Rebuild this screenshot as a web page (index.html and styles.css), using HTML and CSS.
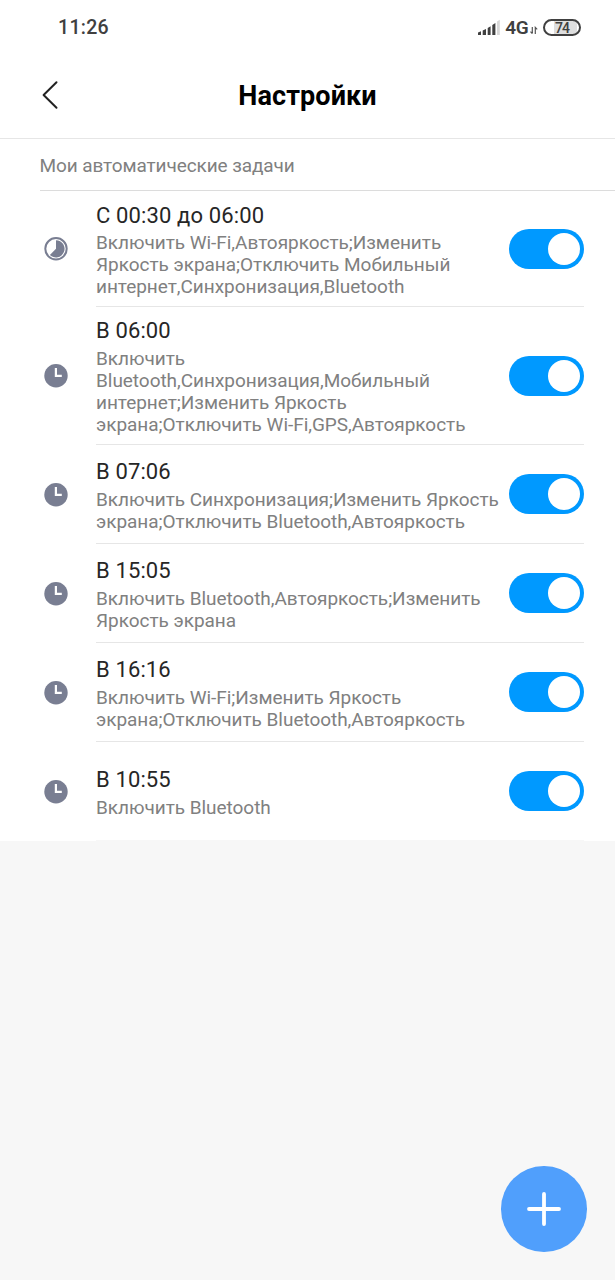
FILE: index.html
```html
<!DOCTYPE html>
<html lang="ru">
<head>
<meta charset="utf-8">
<title>Настройки</title>
<link rel="stylesheet" href="styles.css">
</head>
<body>
<svg width="0" height="0" class="defs" aria-hidden="true">
  <symbol id="clock" viewBox="0 0 24 24">
    <circle cx="12" cy="11.8" r="11.7" fill="#797e92"/>
    <path d="M11.9 4V11.8H17.8" fill="none" stroke="#fff" stroke-width="2.2"/>
  </symbol>
  <symbol id="period" viewBox="0 0 24 24">
    <circle cx="12" cy="11.8" r="10.7" fill="none" stroke="#797e92" stroke-width="2"/>
    <path d="M12 11.8V3.2A8.6 8.6 0 1 1 5.9 17.9Z" fill="#797e92"/>
  </symbol>
</svg>
<div class="screen">
  <div class="status">
    <span class="time">11:26</span>
    <div class="indicators">
      <svg class="signal" width="24" height="17" viewBox="0 0 24 17">
        <path d="M1 16V13.5L4 12.3V16ZM5.7 16V11.5L9 10V16ZM10.7 16V9L13.6 7.3V16ZM15.3 16V6L18.4 4V16Z" fill="#404040"/>
        <path d="M20 16V2.5L22.8 .8V16Z" fill="#d8d8d8"/>
      </svg>
      <span class="network">4G</span>
      <svg class="data" width="8" height="9" viewBox="0 0 8 9">
        <path d="M2.3 1V7.6M.5 5.6L2.3 7.6M5.3 8V1.4L7.2 3.4" fill="none" stroke="#555" stroke-width="1.2"/>
      </svg>
      <span class="battery">74</span>
    </div>
  </div>
  <header class="header">
    <svg class="back" width="18" height="30" viewBox="0 0 18 30">
      <path d="M15.5 2.2L2.6 15L15.5 27.8" fill="none" stroke="#222" stroke-width="2" stroke-linecap="round" stroke-linejoin="round"/>
    </svg>
    <h1 class="heading">Настройки</h1>
  </header>
  <div class="section">Мои автоматические задачи</div>
  <div class="list">
    <div class="row tall3">
      <svg class="icon"><use href="#period"/></svg>
      <div class="content">
        <div class="text"><div class="title">С 00:30 до 06:00</div>
        <div class="desc">Включить Wi-Fi,Автояркость;Изменить<br>Яркость экрана;Отключить Мобильный<br>интернет,Синхронизация,Bluetooth</div></div>
        <span class="toggle"></span>
      </div>
    </div>
    <div class="row tall4">
      <svg class="icon"><use href="#clock"/></svg>
      <div class="content">
        <div class="text"><div class="title">В 06:00</div>
        <div class="desc">Включить<br>Bluetooth,Синхронизация,Мобильный<br>интернет;Изменить Яркость<br>экрана;Отключить Wi-Fi,GPS,Автояркость</div></div>
        <span class="toggle"></span>
      </div>
    </div>
    <div class="row">
      <svg class="icon"><use href="#clock"/></svg>
      <div class="content">
        <div class="text"><div class="title">В 07:06</div>
        <div class="desc">Включить Синхронизация;Изменить Яркость<br>экрана;Отключить Bluetooth,Автояркость</div></div>
        <span class="toggle"></span>
      </div>
    </div>
    <div class="row">
      <svg class="icon"><use href="#clock"/></svg>
      <div class="content">
        <div class="text"><div class="title">В 15:05</div>
        <div class="desc">Включить Bluetooth,Автояркость;Изменить<br>Яркость экрана</div></div>
        <span class="toggle"></span>
      </div>
    </div>
    <div class="row">
      <svg class="icon"><use href="#clock"/></svg>
      <div class="content">
        <div class="text"><div class="title">В 16:16</div>
        <div class="desc">Включить Wi-Fi;Изменить Яркость<br>экрана;Отключить Bluetooth,Автояркость</div></div>
        <span class="toggle"></span>
      </div>
    </div>
    <div class="row last">
      <svg class="icon"><use href="#clock"/></svg>
      <div class="content">
        <div class="text"><div class="title">В 10:55</div>
        <div class="desc">Включить Bluetooth</div></div>
        <span class="toggle"></span>
      </div>
    </div>
  </div>
</div>
<div class="fab">
  <svg width="34" height="34" viewBox="0 0 34 34"><path d="M17 2V32M2 17H32" stroke="#fff" stroke-width="3.8" stroke-linecap="round"/></svg>
</div>
</body>
</html>
```
FILE: styles.css
```css
* { box-sizing: border-box; }
body {
  margin: 0;
  height: 1280px;
  overflow: hidden;
  background: #f7f7f7;
  font-family: Roboto, sans-serif;
}
.defs { position: absolute; }
.screen { background: #fff; }
.status {
  height: 54px;
  padding: 0 34px 0 58px;
  display: flex;
  align-items: center;
  justify-content: space-between;
  color: #404040;
}
.time { font-size: 19.5px; font-weight: 500; letter-spacing: 0.3px; padding-top: 1px; }
.indicators { display: flex; align-items: center; }
.signal { margin-right: 4px; }
.network { font-size: 19px; font-weight: 600; line-height: 20px; letter-spacing: -0.3px; padding-top: 1px; }
.data { margin: 6px 5px 0 1.5px; }
.battery {
  width: 38px;
  height: 17px;
  border: 2px solid #404040;
  border-radius: 9px;
  background: linear-gradient(90deg, #fff 9px, #dedede 9px, #dedede 32px, #fff 32px);
  font-size: 14px;
  font-weight: 500;
  line-height: 14px;
  letter-spacing: -1px;
  text-align: center;
}
.header {
  height: 85px;
  border-bottom: 1px solid #e6e6e6;
  padding: 0 41px;
  display: grid;
  grid-template-columns: 18px 1fr 18px;
  align-items: center;
}
.back { margin-top: -3px; }
.heading {
  margin: 0;
  text-align: center;
  font-size: 27px;
  font-weight: 700;
  line-height: 32px;
  letter-spacing: 0.1px;
  color: #000;
}
.section {
  height: 52px;
  margin-left: 40px;
  border-bottom: 1px solid #dcdcdc;
  line-height: 53px;
  font-size: 19px;
  letter-spacing: -0.1px;
  text-indent: -0.5px;
  color: #808080;
}
.row {
  height: 99px;
  display: flex;
  align-items: center;
  padding: 0 31px 0 44px;
}
.tall3 { height: 116px; }
.tall4 { height: 138px; }
.icon { width: 24px; height: 24px; margin-right: 28px; flex: none; }
.content {
  flex: 1;
  height: 100%;
  display: flex;
  align-items: center;
  justify-content: space-between;
  border-bottom: 1px solid #e6e6e6;
  white-space: nowrap;
}
.last .content { border-color: #f7f7f7; }
.text { width: 412px; padding-top: 3px; }
.title { font-size: 22px; line-height: 28px; letter-spacing: 0.13px; color: #262626; }
.desc { margin-top: 3px; font-size: 19px; line-height: 22px; letter-spacing: -0.04px; color: #808080; }
.tall3 .desc { margin-top: 2px; }
.tall4 .text { padding-top: 1px; }
.toggle {
  flex: none;
  width: 75px;
  height: 40px;
  border-radius: 20px;
  background: #0099ff;
  display: flex;
  align-items: center;
  justify-content: flex-end;
  padding-right: 4px;
}
.toggle::after {
  content: "";
  width: 32px;
  height: 32px;
  border-radius: 50%;
  background: #fff;
}
.fab {
  position: absolute;
  left: 501px;
  top: 1166px;
  width: 85.5px;
  height: 85.5px;
  border-radius: 50%;
  background: #509ffc;
  display: flex;
  align-items: center;
  justify-content: center;
}
```
